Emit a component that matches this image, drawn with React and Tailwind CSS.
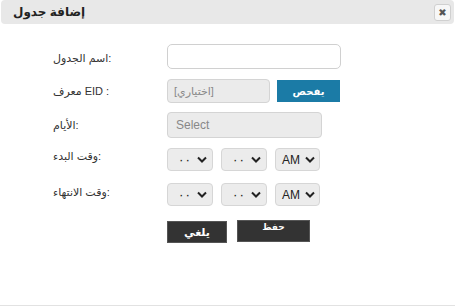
import React from "react";

const Chevron = () => (
  <svg width="10" height="7" viewBox="0 0 10 7" className="shrink-0">
    <path d="M1 1.5 L5 5.5 L9 1.5" fill="none" stroke="#222" strokeWidth="2" />
  </svg>
);

// small time dropdown
const TimeSelect = ({ value, wide }) => (
  <div
    className={`flex items-center justify-between h-[23px] rounded-[4px] border border-[#d6d6d6] bg-[#ececec] ${
      wide ? "w-[45px] pl-[6px] pr-[4px]" : "w-[46px] pl-[10px] pr-[5px]"
    }`}
  >
    <span className="text-[12px] text-[#222] leading-none">{value}</span>
    <Chevron />
  </div>
);

const Label = ({ children, className = "" }) => (
  <div className={`w-[114px] shrink-0 text-[11px] text-[#333] ${className}`}>{children}</div>
);

// arabic label followed by a colon, ltr line so the colon ends on the right
const withColon = (txt) => txt + ":";

export default function App() {
  return (
    <div
      dir="ltr"
      className="w-[455px] h-[306px] bg-white relative overflow-hidden"
      style={{ fontFamily: '"Liberation Sans", "DejaVu Sans", sans-serif' }}
    >
      {/* header */}
      <div className="mx-[1px] h-[24px] bg-[#e8e8e8] rounded-[4px] flex items-center justify-between pl-[12px] pr-[3px]">
        <span className="text-[12px] font-bold text-[#222]">إضافة جدول</span>
        <div className="w-[17px] h-[17px] rounded-[3px] border border-[#d0d0d0] bg-[#f7f7f7] flex items-center justify-center text-[10px] text-[#555]">
          ✖
        </div>
      </div>

      <div className="pl-[53px] pt-[20px] flex flex-col">
        {/* table name */}
        <div className="flex items-center h-[25px]">
          <Label className="mt-[4px]">{withColon("اسم الجدول")}</Label>
          <div className="w-[174px] h-[25px] rounded-[5px] border border-[#d0d0d0] bg-white" />
        </div>

        {/* EID */}
        <div className="flex items-center h-[24px] mt-[10px]">
          <Label>{"معرف" + " EID :"}</Label>
          <div className="w-[103px] h-[24px] rounded-[4px] border border-[#d4d4d4] bg-[#ebebeb] flex items-center pl-[6px] text-[11px] text-[#888]">
            [اختياري]
          </div>
          <button className="ml-[7px] w-[63px] h-[22px] bg-[#1b7ba6] text-white text-[10px] font-bold">
            يفحص
          </button>
        </div>

        {/* days */}
        <div className="flex items-center h-[26px] mt-[9px]">
          <Label>{withColon("الأيام")}</Label>
          <div className="w-[155px] h-[26px] rounded-[4px] border border-[#d4d4d4] bg-[#ebebeb] flex items-center pl-[8px] text-[12px] text-[#888]">
            Select
          </div>
        </div>

        {/* start time */}
        <div className="flex items-center h-[23px] mt-[10px]">
          <Label className="-mt-[7px]">{withColon("وقت البدء")}</Label>
          <div className="flex gap-[8px]">
            <TimeSelect value="٠٠" />
            <TimeSelect value="٠٠" />
            <TimeSelect value="AM" wide />
          </div>
        </div>

        {/* end time */}
        <div className="flex items-center h-[23px] mt-[12px]">
          <Label className="-mt-[4px]">{withColon("وقت الانتهاء")}</Label>
          <div className="flex gap-[8px]">
            <TimeSelect value="٠٠" />
            <TimeSelect value="٠٠" />
            <TimeSelect value="AM" wide />
          </div>
        </div>

        {/* buttons */}
        <div className="flex items-start mt-[14px] pl-[114px] gap-[10px]">
          <button className="w-[60px] h-[22px] mt-[1px] bg-[#333] border border-[#555] text-white text-[11px] font-bold">
            يلغي
          </button>
          <button className="w-[73px] h-[22px] bg-[#333] border border-[#555] text-white text-[9px] font-bold leading-none pb-[7px]">
            حفظ
          </button>
        </div>
      </div>

      <div className="absolute left-0 right-0 bottom-0 h-[1px] bg-[#e2e2e2]" />
    </div>
  );
}
